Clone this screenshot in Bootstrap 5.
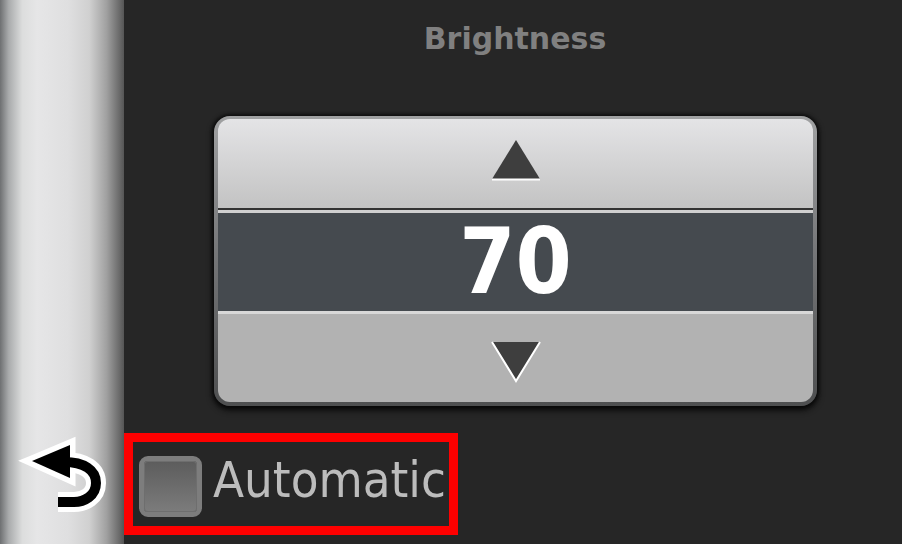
<!DOCTYPE html>
<html lang="en">
<head>
  <meta charset="UTF-8">
  <meta name="viewport" content="width=device-width, initial-scale=1.0">
  <title>Brightness</title>
  <link href="https://cdn.jsdelivr.net/npm/bootstrap@5.3.0/dist/css/bootstrap.min.css" rel="stylesheet">
  <style>
    html, body { height: 544px; overflow: hidden; }
    body { background: #262626; font-family: "DejaVu Sans", sans-serif; }
    .screen { width: 902px; height: 544px; }
    .back-bar {
      width: 124px; padding-bottom: 26px;
      background: linear-gradient(90deg, #6e7072 0%, #a9abac 7%, #dcdddd 18%, #e6e6e7 30%, #dfdfe0 55%, #d0d0d0 72%, #a0a0a0 86%, #666 97%, #555 100%);
    }
    .back-icon { margin-left: 14px; }
    .main-pane { width: 778px; }
    .title-text { height: 116px; padding: 18px 0 0 4px; font-size: 30px; line-height: 42px; font-weight: 700; color: #808080; }
    .spinner-box {
      width: 603px; height: 290px; margin-left: 90px; padding: 3px 4px 1px 4px;
      border-radius: 16px; background: linear-gradient(#a0a1a2, #77787a 45%, #4e4f50);
      box-shadow: 0 3px 6px 1px #080808, 0 0 3px 2px #141414;
    }
    .spin-up { height: 91px; border-radius: 12px 12px 0 0; background: linear-gradient(#e4e4e6, #c2c2c2); }
    .spin-up svg { margin-bottom: 29px; }
    .spin-value {
      height: 104px; background: #454a4f; color: #fff;
      border-top: 3px solid #d0d0d0; border-bottom: 3px solid #d8d8d8;
      box-shadow: 0 -2px 0 #333, 0 2px 0 #333;
      font-stretch: condensed; font-size: 90px; font-weight: 700; line-height: 1;
    }
    .spin-down { height: 88px; border-radius: 0 0 12px 12px; background: #b2b2b2; }
    .spin-down svg { margin-top: 26px; }
    .auto-row {
      width: 334px; height: 102px; margin-top: 27px; padding-left: 6px;
      border: 9px solid #fe0000; color: #bcbcbc; font-stretch: condensed; font-size: 50.5px; line-height: 1;
    }
    .check-box {
      width: 63px; height: 61px; flex: none; margin: 5px 11px 0 0; border-radius: 9px;
      background: linear-gradient(#5c5c5c, #7c7c7c) padding-box;
      border: 5px solid #7d7d7d; box-shadow: inset 0 0 0 1px #6e6e6e;
    }
    .auto-label { margin-top: -8px; }
  </style>
</head>
<body>
  <div class="screen d-flex">
    <div class="back-bar d-flex align-items-end">
      <svg class="back-icon" width="100" height="84" viewBox="0 0 100 84">
        <g fill="none" stroke="#fff" stroke-linejoin="miter">
          <path d="M18 27 L56 11 L56 44 Z" fill="#fff" stroke-width="11"/>
          <path d="M50 28 C70 28 82 36 82 49 C82 62 70 68 60 68 L44 68" stroke-width="20"/>
        </g>
        <path d="M18 27 L56 11 L56 44 Z" fill="#000"/>
        <path d="M50 28 C70 28 82 36 82 49 C82 62 70 68 60 68 L44 68" fill="none" stroke="#000" stroke-width="10"/>
      </svg>
    </div>
    <div class="main-pane">
      <div class="title-text text-center">Brightness</div>
      <div class="spinner-box">
        <div class="spin-up d-flex justify-content-center align-items-end">
          <svg width="50" height="42" viewBox="0 0 50 42"><path d="M25 1 L49 40 L1 40 Z" fill="#3e3e3e"/><path d="M1 40.5 H49" stroke="#fff" stroke-width="2"/></svg>
        </div>
        <div class="spin-value d-flex align-items-center justify-content-center">70</div>
        <div class="spin-down d-flex justify-content-center align-items-start">
          <svg width="50" height="44" viewBox="0 0 50 44"><path d="M1 2 H49 L25 41 Z" fill="#3e3e3e"/><path d="M1 2 L25 41 L49 2" fill="none" stroke="#fff" stroke-width="2"/></svg>
        </div>
      </div>
      <div class="auto-row d-flex align-items-center">
        <div class="check-box"></div>
        <span class="auto-label">Automatic</span>
      </div>
    </div>
  </div>
  <script src="https://cdn.jsdelivr.net/npm/bootstrap@5.3.0/dist/js/bootstrap.bundle.min.js"></script>
</body>
</html>
